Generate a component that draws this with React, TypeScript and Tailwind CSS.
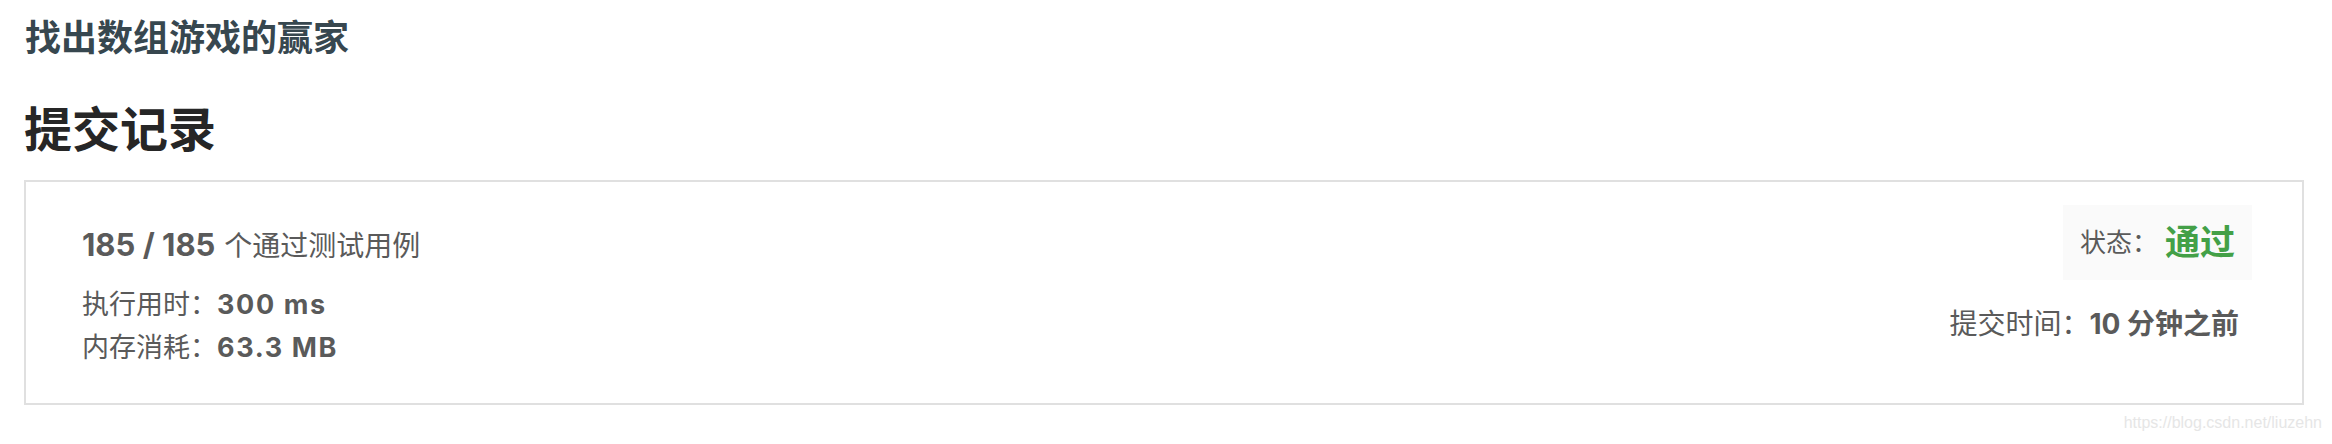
import React from "react";

const font = {
  fontFamily: "Inter, 'Noto Sans CJK SC', sans-serif",
};

export default function App() {
  return (
    <div className="w-[2332px] h-[444px] bg-white overflow-hidden" style={font}>
      <div className="pl-[24px] pr-[28px] pt-[20px]">
        <h3 className="text-[36px] leading-[36px] font-bold text-[#37474f] pl-[1px]">
          找出数组游戏的赢家
        </h3>
        <h2 className="mt-[50px] text-[48px] leading-[48px] font-bold text-[#262626]">
          提交记录
        </h2>

        <div className="mt-[26px] h-[225px] border-2 border-[#e0e0e0] flex justify-between pl-[56px] pr-[50px]">
          <div className="pt-[47px] text-[#5a5a5a]">
            <div className="text-[31px] leading-[31px]">
              <span className="font-bold">185 / 185</span> <span className="text-[28px]">个通过测试用例</span>
            </div>
            <div className="mt-[21px] text-[27px] leading-[43px]">
              执行用时：<span className="font-bold tracking-[0.06em]">300 ms</span>
            </div>
            <div className="text-[27px] leading-[43px]">
              内存消耗：<span className="font-bold tracking-[0.06em]">63.3 MB</span>
            </div>
          </div>

          <div className="pt-[23px] flex flex-col items-end text-[#5a5a5a]">
            <div className="h-[75px] bg-[#fafafa] flex items-center px-[17px]">
              <span className="text-[26px]">状态：</span>
              <span className="ml-[7px] text-[35px] font-bold text-[#43a047]">通过</span>
            </div>
            <div className="mt-[30px] mr-[13px] text-[28px] leading-[28px]">
              提交时间：<span className="font-bold">10 分钟之前</span>
            </div>
          </div>
        </div>

        <div className="flex justify-end mt-[9px]">
          <span className="text-[16px] leading-[18px] text-[#e6e6e6] mr-[-18px]" style={{ fontFamily: "'Liberation Sans', sans-serif" }}>
            https://blog.csdn.net/liuzehn
          </span>
        </div>
      </div>
    </div>
  );
}
